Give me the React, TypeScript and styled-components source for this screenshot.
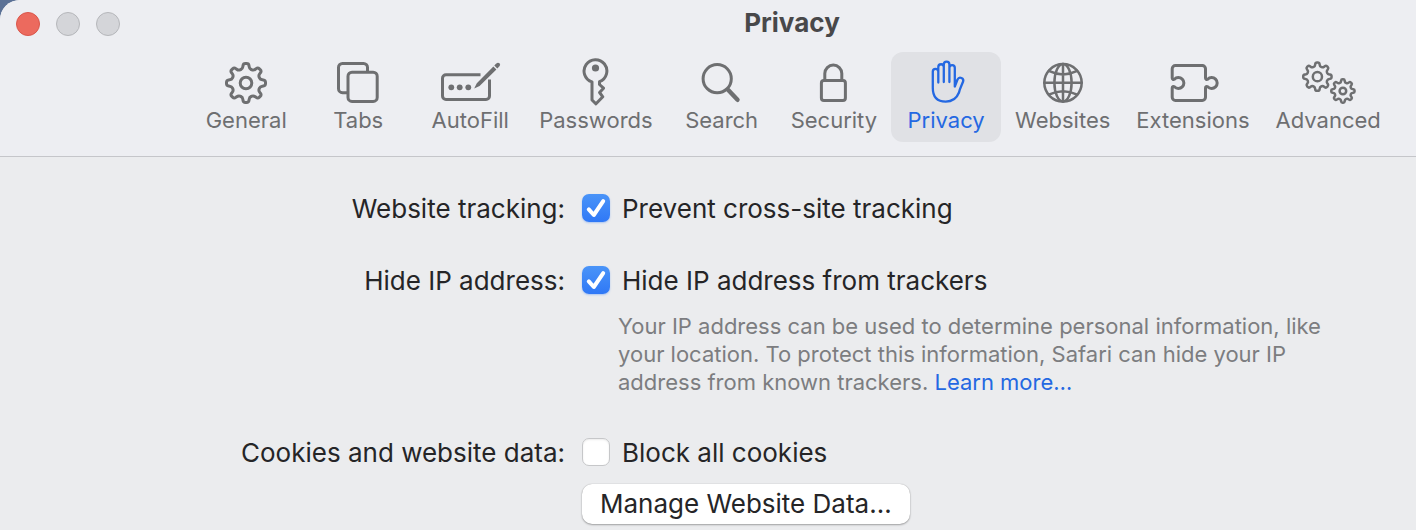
import React, { useState } from "react";
import styled, { createGlobalStyle } from "styled-components";

const GlobalStyle = createGlobalStyle`
  * { box-sizing: border-box; }
  body {
    margin: 0;
    background: #5b7196;
    font-family: Inter, "Liberation Sans", sans-serif;
    color: #252527;
  }
`;

const Window = styled.main`
  min-height: 100vh;
  background: #ebecee;
  border-top-left-radius: 20px;
  overflow: hidden;
`;

const Header = styled.header`
  position: relative;
  padding: 6px 0 14px 168px;
  background: #edeef2;
  border-bottom: 1px solid #c5c6ca;
`;

const TrafficLights = styled.div`
  position: absolute;
  top: 12px;
  left: 16px;
  display: flex;
  gap: 16px;
`;

const Light = styled.button<{ $fill: string; $edge: string }>`
  width: 24px;
  height: 24px;
  padding: 0;
  border: 1px solid ${(p) => p.$edge};
  border-radius: 50%;
  background: ${(p) => p.$fill};
`;

const Title = styled.h1`
  margin: 0 0 12px;
  font-size: 26px;
  line-height: 34px;
  font-weight: 700;
  text-align: center;
  color: #48484a;
`;

const Toolbar = styled.nav`
  display: flex;
  justify-content: center;
  gap: 2px;
`;

const ToolbarButton = styled.button<{ $active: boolean }>`
  display: flex;
  flex-direction: column;
  align-items: center;
  flex: none;
  min-width: 110px;
  padding: 6px 12px 8px;
  border: 0;
  border-radius: 12px;
  background: ${(p) => (p.$active ? "#e0e1e5" : "transparent")};
  color: ${(p) => (p.$active ? "#2468e2" : "#6e6f71")};
  font-family: inherit;
  font-size: 22px;
  line-height: 28px;
  white-space: nowrap;
`;

const Icon = styled.svg`
  display: block;
  width: 64px;
  height: 48px;
  fill: none;
  stroke: currentColor;
  stroke-width: 3;
  stroke-linecap: round;
  stroke-linejoin: round;
`;

const Form = styled.form`
  display: flex;
  flex-direction: column;
  gap: 40px;
  padding: 36px 16px 6px 0;
`;

const Row = styled.div`
  display: grid;
  grid-template-columns: 565px minmax(0, 1fr);
  column-gap: 17px;
  font-size: 26px;
  line-height: 32px;
`;

const RowLabel = styled.span`
  text-align: right;
`;

const Field = styled.div`
  display: flex;
  flex-direction: column;
  align-items: flex-start;
`;

const Option = styled.label`
  display: flex;
  align-items: center;
  gap: 12px;
`;

const BoxWrap = styled.span`
  position: relative;
  display: flex;
  width: 28px;
  height: 28px;
  margin-bottom: 2px;
`;

const Box = styled.input`
  appearance: none;
  width: 28px;
  height: 28px;
  margin: 0;
  border: 1px solid #c6c7c9;
  border-radius: 7px;
  background: #fff;
  box-shadow: inset 0 1px 2px rgba(0, 0, 0, 0.08);

  &:checked {
    border: 0;
    background: linear-gradient(#4a94f8, #2f78f6);
    box-shadow: 0 1px 2px rgba(47, 120, 246, 0.35);
  }
`;

const Tick = styled.svg`
  position: absolute;
  inset: 0;
  fill: none;
  stroke: #fff;
  stroke-width: 4;
  stroke-linecap: round;
  stroke-linejoin: round;
  pointer-events: none;
`;

const Hint = styled.p`
  max-width: 756px;
  margin: 15px 0 1px;
  padding-left: 36px;
  font-size: 22px;
  line-height: 28px;
  color: #7c7d80;
`;

const Link = styled.a`
  color: #2468e2;
  text-decoration: none;
`;

const PushButton = styled.button`
  height: 40px;
  margin-top: 15px;
  padding: 0 18px;
  border: 0;
  border-radius: 10px;
  background: #fff;
  box-shadow: 0 0 1px rgba(0, 0, 0, 0.3), 0 1px 2px rgba(0, 0, 0, 0.3);
  color: inherit;
  font: inherit;
  white-space: nowrap;
`;

/* Closed outline of an eight-toothed gear with rounded corners. */
function gearPath(cx: number, cy: number, tip: number, root: number) {
  const pts: [number, number][] = [];
  for (let i = 0; i < 8; i++) {
    const mid = i * 45 - 90;
    for (const [r, off] of [[root, -13.5], [tip, -8], [tip, 8], [root, 13.5]]) {
      const a = ((mid + off) * Math.PI) / 180;
      pts.push([cx + r * Math.cos(a), cy + r * Math.sin(a)]);
    }
  }
  const n = pts.length;
  const part = (a: [number, number], b: [number, number], t: number) =>
    `${(a[0] + (b[0] - a[0]) * t).toFixed(2)} ${(a[1] + (b[1] - a[1]) * t).toFixed(2)}`;
  return (
    pts
      .map((p, i) => {
        const prev = pts[(i + n - 1) % n];
        const next = pts[(i + 1) % n];
        return `${i ? "L" : "M"}${part(p, prev, 0.4)}Q${p[0].toFixed(2)} ${p[1].toFixed(2)} ${part(p, next, 0.4)}`;
      })
      .join("") + "Z"
  );
}

const tabs: { name: string; art: React.ReactNode }[] = [
  {
    name: "General",
    art: (
      <>
        <path d={gearPath(32, 25, 19.7, 14.6)} />
        <circle cx="32" cy="25" r="5.8" />
      </>
    ),
  },
  {
    name: "Tabs",
    art: (
      <>
        <path d="M21 34.7h-4.5a4 4 0 0 1-4-4V9.5a4 4 0 0 1 4-4h21a4 4 0 0 1 4 4v4" />
        <rect x="22" y="14.2" width="29.2" height="29.2" rx="4" />
      </>
    ),
  },
  {
    name: "AutoFill",
    art: (
      <>
        <path
          strokeLinecap="butt"
          d="M42.5 16.8H8a3.5 3.5 0 0 0-3.5 3.5V38a3.5 3.5 0 0 0 3.5 3.5h40a3.5 3.5 0 0 0 3.5-3.5V21.5"
        />
        <path
          fill="currentColor"
          stroke="none"
          d="M36.2 30.6l2.6-5.4L55.4 8.4l3 3L41.6 28.1zM56.3 7.5l1.7-1.7 3 3-1.7 1.7z"
        />
        <circle cx="60" cy="6.8" r="2.1" fill="currentColor" stroke="none" />
        <g fill="currentColor" stroke="none">
          <circle cx="13.3" cy="29.3" r="2.9" />
          <circle cx="21.7" cy="29.3" r="2.9" />
          <circle cx="30.3" cy="29.3" r="2.9" />
        </g>
      </>
    ),
  },
  {
    name: "Passwords",
    art: (
      <>
        <path d="M28 23.9a11.4 11.4 0 1 1 7.5-.2v2.8l4 3.7-3.9 4.3 3.2 4.3-6.8 7L28 42z" />
        <circle cx="31.5" cy="10" r="3.6" fill="currentColor" stroke="none" />
      </>
    ),
  },
  {
    name: "Search",
    art: (
      <>
        <circle cx="27.2" cy="20.7" r="14.1" />
        <path strokeWidth="4.4" d="M38 31.8l9.5 10" />
      </>
    ),
  },
  {
    name: "Security",
    art: (
      <>
        <rect x="19.4" y="22.4" width="24" height="20.2" rx="2.5" />
        <path d="M22.8 22v-6.4a8.5 8.5 0 0 1 17 0V22" />
      </>
    ),
  },
  {
    name: "Privacy",
    art: (
      <path
        strokeWidth="2.3"
        d="M24.3 24.5V13.6a2.75 2.75 0 0 0-5.5 0V30c0 9 4.7 13.6 12.9 13.6 6.8 0 10.8-2.8 13.3-9.1.7-3.8 2.9-7.6 4.1-11 1.1-3.2-3.7-5.6-5.6-2L40.8 28.5V9.8a2.7 2.7 0 0 0-5.4 0v14.2V6.5a2.8 2.8 0 0 0-5.6 0v17.5V9a2.75 2.75 0 0 0-5.5 0v5"
      />
    ),
  },
  {
    name: "Websites",
    art: (
      <g strokeWidth="2.5">
        <circle cx="32" cy="24.8" r="18.7" />
        <ellipse cx="32" cy="24.8" rx="8.6" ry="18.7" />
        <path d="M32 6.1v37.4M13.3 24.8h37.4M17.8 12.9q14.2 7 28.4 0M17.8 36.7q14.2-7 28.4 0" />
      </g>
    ),
  },
  {
    name: "Extensions",
    art: (
      <path d="M14.4 7.5H41.3a3.2 3.2 0 0 1 3.2 3.2V20c0 1.3 1.2 1.8 2.2 1.2a5.5 5.5 0 1 1 0 7.6c-1-.6-2.2-.1-2.2 1.2v9.3a3.2 3.2 0 0 1-3.2 3.2H14.4a3.2 3.2 0 0 1-3.2-3.2V30c0-1.3 1.2-1.8 2.2-1.2a5.5 5.5 0 1 0 0-7.6c-1 .6-2.2.1-2.2-1.2V10.7a3.2 3.2 0 0 1 3.2-3.2z" />
    ),
  },
  {
    name: "Advanced",
    art: (
      <g strokeWidth="2.5">
        <path d={gearPath(21.4, 18.7, 14.3, 10.6)} />
        <circle cx="21.4" cy="18.7" r="4.6" />
        <path d={gearPath(46.9, 33, 11.8, 8.7)} />
        <circle cx="46.9" cy="33" r="3.3" />
      </g>
    ),
  },
];

function Check({ text, checked: initial = false }: { text: string; checked?: boolean }) {
  const [checked, setChecked] = useState(initial);
  return (
    <Option>
      <BoxWrap>
        <Box type="checkbox" checked={checked} onChange={(e) => setChecked(e.target.checked)} />
        {checked && (
          <Tick viewBox="0 0 28 28" aria-hidden="true">
            <path d="M6.8 15.4l5 5.6L21.2 7.2" />
          </Tick>
        )}
      </BoxWrap>
      {text}
    </Option>
  );
}

export default function App() {
  const [active, setActive] = useState("Privacy");
  return (
    <>
      <GlobalStyle />
      <Window>
        <Header>
          <TrafficLights>
            <Light type="button" aria-label="Close" $fill="#ec6a5e" $edge="#d9564b" />
            <Light type="button" aria-label="Minimize" $fill="#d4d5d9" $edge="#b5b6ba" />
            <Light type="button" aria-label="Zoom" $fill="#d4d5d9" $edge="#b5b6ba" />
          </TrafficLights>
          <Title>Privacy</Title>
          <Toolbar>
            {tabs.map((t) => (
              <ToolbarButton
                key={t.name}
                type="button"
                $active={t.name === active}
                onClick={() => setActive(t.name)}
              >
                <Icon viewBox="0 0 64 48" aria-hidden="true">
                  {t.art}
                </Icon>
                {t.name}
              </ToolbarButton>
            ))}
          </Toolbar>
        </Header>
        <Form>
          <Row role="group" aria-labelledby="tracking">
            <RowLabel id="tracking">Website tracking:</RowLabel>
            <Field>
              <Check text="Prevent cross-site tracking" checked />
            </Field>
          </Row>
          <Row role="group" aria-labelledby="hide-ip">
            <RowLabel id="hide-ip">Hide IP address:</RowLabel>
            <Field>
              <Check text="Hide IP address from trackers" checked />
              <Hint>
                Your IP address can be used to determine personal information, like your location. To
                protect this information, Safari can hide your IP address from known trackers.{" "}
                <Link href="#learn-more">Learn more…</Link>
              </Hint>
            </Field>
          </Row>
          <Row role="group" aria-labelledby="cookies">
            <RowLabel id="cookies">Cookies and website data:</RowLabel>
            <Field>
              <Check text="Block all cookies" />
              <PushButton type="button">Manage Website Data…</PushButton>
            </Field>
          </Row>
        </Form>
      </Window>
    </>
  );
}
